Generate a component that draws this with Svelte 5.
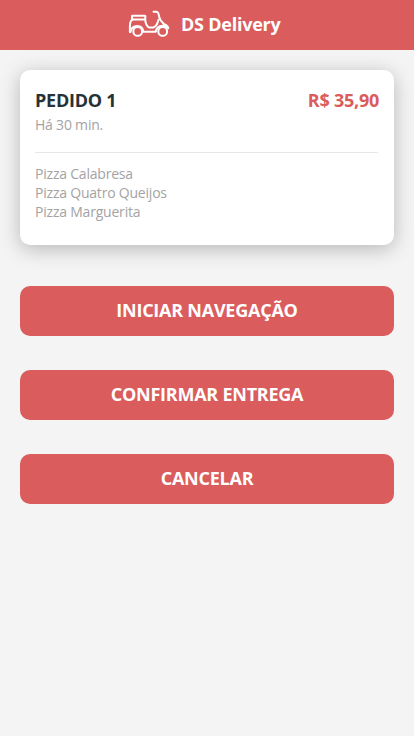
<script>
  const order = {
    id: 1,
    price: 'R$ 35,90',
    elapsed: 'Há 30 min.',
    products: ['Pizza Calabresa', 'Pizza Quatro Queijos', 'Pizza Marguerita']
  };
  const actions = ['INICIAR NAVEGAÇÃO', 'CONFIRMAR ENTREGA', 'CANCELAR'];
</script>

<header>
  <svg class="logo" width="42" height="28" viewBox="0 0 42 28" aria-hidden="true">
    <rect x="4" y="6.7" width="13.3" height="3.7" rx="0.4" />
    <path d="M1.9 23V17.4C1.9 13.6 3.2 10.9 5 10.5M17.2 10.5C17.5 14.3 18.8 17.5 21.2 18.6H25.2C27.8 17.5 29.8 13.9 30.4 11" />
    <path d="M25.5 2.8H28.4C30.2 3 30.8 5 31.2 7.8C31.7 11.1 34.2 13.2 36.2 15.2C38.3 16.1 40.2 17.2 40.3 19.2C38.6 17.4 36.8 16.6 34.4 16.7C30.7 16.9 28.3 19.1 27.8 22.7H15.2C15 19.2 12.7 16.9 9.3 16.9C5.4 16.9 3 19.4 2.4 23" />
    <circle cx="9.7" cy="22.4" r="4.4" />
    <circle cx="34.7" cy="22.4" r="4.4" />
  </svg>
  <span>DS Delivery</span>
</header>

<main>
  <article>
    <div class="top">
      <h1>PEDIDO {order.id}</h1>
      <strong>{order.price}</strong>
    </div>
    <p class="elapsed">{order.elapsed}</p>
    <ul>
      {#each order.products as product}
        <li>{product}</li>
      {/each}
    </ul>
  </article>
  <div class="actions">
    {#each actions as action}
      <button type="button">{action}</button>
    {/each}
  </div>
</main>

<style>
  :global(body) {
    background: #f4f4f4;
    font-family: 'Open Sans', sans-serif;
  }
  header {
    display: flex;
    justify-content: center;
    height: 50px;
    background: #da5c5c;
    color: #fff;
    font-size: 18px;
    font-weight: 700;
    line-height: 25px;
    letter-spacing: -0.24px;
    padding-right: 5px;
  }
  header span {
    margin: 12px 0 0 10.5px;
  }
  .logo {
    margin-top: 9px;
    fill: none;
    stroke: #fff;
    stroke-width: 2;
    stroke-linecap: round;
    stroke-linejoin: round;
  }
  main {
    padding: 20px;
  }
  article {
    box-sizing: border-box;
    height: 175px;
    padding: 18px 15px 0;
    border-radius: 10px;
    background: #fff;
    box-shadow: 0 4px 20px rgba(0, 0, 0, 0.25);
  }
  .top {
    display: flex;
    justify-content: space-between;
    font-size: 18px;
    line-height: 25px;
    letter-spacing: -0.24px;
  }
  h1 {
    margin: 0;
    font-size: inherit;
    font-weight: 700;
    color: #263238;
  }
  strong {
    font-weight: 700;
    color: #da5c5c;
  }
  .elapsed,
  ul {
    margin: 0;
    font-size: 14px;
    font-weight: 400;
    line-height: 19px;
    letter-spacing: -0.21px;
    color: #a3a3a3;
  }
  .elapsed {
    margin: 2px 1px 0 0;
    padding-bottom: 18px;
    border-bottom: 1px solid #e6e6e6;
  }
  ul {
    padding: 11px 0 0;
    list-style: none;
  }
  .actions {
    display: flex;
    flex-direction: column;
    gap: 34px;
    margin-top: 41px;
  }
  button {
    height: 50px;
    padding: 0 0 2px;
    border: 0;
    border-radius: 10px;
    background: #da5c5c;
    color: #fff;
    font: 700 18px/25px 'Open Sans', sans-serif;
    letter-spacing: -0.24px;
  }
</style>
